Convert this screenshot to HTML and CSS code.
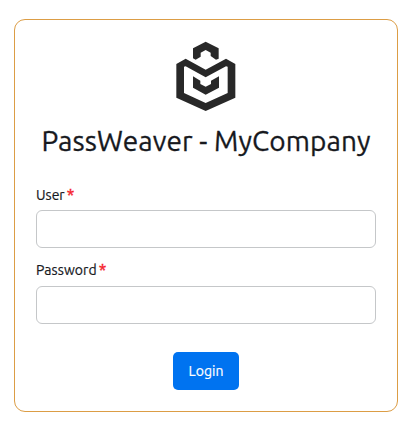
FILE: index.html
```html
<!DOCTYPE html>
<html lang="en">
<head>
<meta charset="utf-8">
<title>PassWeaver - MyCompany</title>
<link rel="stylesheet" href="styles.css">
</head>
<body>
<main class="card">
  <svg class="logo" viewBox="0 0 240 240" aria-hidden="true">
    <path d="M84 40 122 20 161 40V71L153 74 137 63V53L122 45 107 53V65L92 74 84 70Z"/>
    <path fill-rule="evenodd" d="M62 71 122 104 183 71 211 87V188L122 228 34 188V87ZM57 95V174L122 204 188 174V95L183 94 122 127 62 94Z"/>
    <path d="M84 124 106 137V147L122 155 138 147V137L162 124V158L122 179 84 158Z"/>
  </svg>
  <h1 class="title">PassWeaver - MyCompany</h1>
  <form class="form">
    <label class="label" for="user"><span>User</span><span class="required">*</span></label>
    <input class="field" id="user" type="text">
    <label class="label label-password" for="password"><span>Password</span><span class="required">*</span></label>
    <input class="field" id="password" type="password">
    <button class="login" type="button">Login</button>
  </form>
</main>
</body>
</html>
```
FILE: styles.css
```css
* { box-sizing: border-box; }
body {
  margin: 0;
  padding: 19px 20px 20px 14px;
  background: #fff;
  color: #17191e;
  font-family: Ubuntu, "Noto Sans", sans-serif;
  font-size: 14px;
  -webkit-text-stroke: 0.2px;
}
.card {
  display: flex;
  flex-direction: column;
  align-items: center;
  width: 384px;
  height: 393px;
  padding: 15px 21px 21px;
  border: 1px solid #dc9d45;
  border-radius: 11px;
}
.logo { width: 80px; height: 80px; margin-right: 2px; flex: none; fill: #282828; }
.title {
  height: 42px;
  margin: 7px 0 0;
  font-size: 28px;
  font-weight: 400;
  letter-spacing: 0.11px;
  line-height: 38px;
  white-space: nowrap;
  -webkit-text-stroke-width: 0.3px;
}
.form { display: flex; flex-direction: column; width: 340px; margin-top: 21px; }
.label { display: flex; height: 22px; margin-bottom: 3px; line-height: 20px; gap: 2px; }
.label-password { height: 23px; margin-top: 12px; letter-spacing: 0.08px; }
.required { color: #f5222d; font-size: 16px; -webkit-text-stroke: 0.4px #f5222d; }
.field {
  width: 340px;
  height: 38px;
  padding: 0 10px;
  border: 1px solid #c5c7c9;
  border-radius: 6px;
  background: #fff;
  font: inherit;
}
.login {
  align-self: center;
  width: 66px;
  height: 38px;
  margin-top: 28px;
  padding: 0;
  border: 0;
  border-radius: 5px;
  background: #0073f0;
  color: #fff;
  font: inherit;
}
```
